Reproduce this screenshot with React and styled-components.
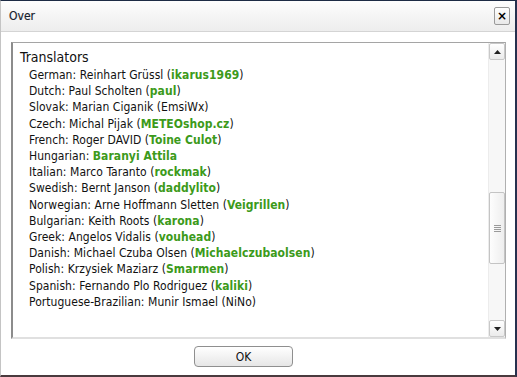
import React from "react";
import styled, { createGlobalStyle } from "styled-components";

const GlobalStyle = createGlobalStyle`
  html, body {
    margin: 0;
    padding: 0;
    background: #ffffff;
  }
  * {
    box-sizing: border-box;
  }
`;

const translators = [
  { lang: "German", name: "Reinhart Grüssl", nick: "ikarus1969", bold: true },
  { lang: "Dutch", name: "Paul Scholten", nick: "paul", bold: true },
  { lang: "Slovak", name: "Marian Ciganik", nick: "EmsiWx" },
  { lang: "Czech", name: "Michal Pijak", nick: "METEOshop.cz", bold: true },
  { lang: "French", name: "Roger DAVID", nick: "Toine Culot", bold: true },
  { lang: "Hungarian", name: "Baranyi Attila", nameBold: true },
  { lang: "Italian", name: "Marco Taranto", nick: "rockmak", bold: true },
  { lang: "Swedish", name: "Bernt Janson", nick: "daddylito", bold: true },
  { lang: "Norwegian", name: "Arne Hoffmann Sletten", nick: "Veigrillen", bold: true },
  { lang: "Bulgarian", name: "Keith Roots", nick: "karona", bold: true },
  { lang: "Greek", name: "Angelos Vidalis", nick: "vouhead", bold: true },
  { lang: "Danish", name: "Michael Czuba Olsen", nick: "Michaelczubaolsen", bold: true },
  { lang: "Polish", name: "Krzysiek Maziarz", nick: "Smarmen", bold: true },
  { lang: "Spanish", name: "Fernando Plo Rodriguez", nick: "kaliki", bold: true },
  { lang: "Portuguese-Brazilian", name: "Munir Ismael", nick: "NiNo" },
];

const Dialog = styled.div`
  width: 517px;
  height: 377px;
  display: flex;
  flex-direction: column;
  background: #ffffff;
  border-top: 1px solid #1d2b45;
  border-right: 2px solid #26314f;
  border-bottom: 2px solid #4a3a3e;
  border-left: 1px solid #c4c4c4;
  font-family: "DejaVu Sans Condensed", "DejaVu Sans", sans-serif;
`;

const TitleBar = styled.div`
  height: 31px;
  flex: none;
  display: flex;
  align-items: center;
  justify-content: space-between;
  padding: 0 5px 0 8px;
  background: linear-gradient(#fdfdfd, #ededed);
  border-bottom: 1px solid #d4d4d4;
`;

const Title = styled.span`
  font-size: 12px;
  color: #16222e;
  -webkit-text-stroke: 0.2px #16222e;
`;

const CloseButton = styled.button`
  width: 16px;
  height: 18px;
  padding: 0;
  display: flex;
  align-items: center;
  justify-content: center;
  border: 1px solid #9a9a9a;
  border-radius: 2px;
  background: linear-gradient(#ffffff, #e8e8e8);
  color: #000;
  font-family: "DejaVu Sans", sans-serif;
  font-size: 12px;
  font-weight: bold;
  line-height: 1;
`;

const Body = styled.div`
  flex: 1;
  display: flex;
  flex-direction: column;
  padding: 10px 9px 0 10px;
`;

const TextBox = styled.div`
  height: 297px;
  display: flex;
  border-top: 1px solid #a5a5a5;
  border-left: 2px solid #8c8c8c;
  border-right: 1px solid #b0b0b0;
  border-bottom: 2px solid #e0e0e0;
  background: #ffffff;
`;

const Content = styled.div`
  flex: 1;
  padding: 4px 0 0 7px;
  color: #111;
`;

const Heading = styled.div`
  font-size: 14px;
  line-height: 20px;
`;

const Row = styled.div`
  font-size: 12px;
  line-height: 16.2px;
  padding-left: 9px;
  white-space: nowrap;
  letter-spacing: 0.05px;
`;

const Green = styled.span`
  color: #3c9a1a;
  font-weight: bold;
`;

const Scrollbar = styled.div`
  width: 17px;
  flex: none;
  display: flex;
  flex-direction: column;
  background: #f7f7f7;
  border-left: 1px solid #ececec;
`;

const ArrowButton = styled.div`
  height: 17px;
  flex: none;
  display: flex;
  align-items: center;
  justify-content: center;
  border: 1px solid #c8c8c8;
  border-radius: 2px;
  background: linear-gradient(#ffffff, #ebebeb);
`;

const Track = styled.div`
  flex: 1;
  display: flex;
  flex-direction: column;
  padding-top: 132px;
`;

const Thumb = styled.div`
  height: 72px;
  display: flex;
  align-items: center;
  justify-content: center;
  border: 1px solid #c4c4c4;
  border-radius: 2px;
  background: linear-gradient(90deg, #fdfdfd, #eeeeee);
`;

const Footer = styled.div`
  flex: 1;
  display: flex;
  justify-content: center;
  align-items: flex-start;
  padding: 7px 30px 0 0;
`;

const OkButton = styled.button`
  width: 99px;
  height: 21px;
  border: 1px solid #8f8f8f;
  border-radius: 4px;
  background: linear-gradient(#ffffff, #e6e6e6);
  font-family: "DejaVu Sans Condensed", "DejaVu Sans", sans-serif;
  font-size: 12px;
  color: #111;
  padding: 0;
`;

const Triangle = ({ up }) => (
  <svg width="7" height="4" viewBox="0 0 7 4">
    <polygon
      points={up ? "0,4 7,4 3.5,0" : "0,0 7,0 3.5,4"}
      fill="#222"
    />
  </svg>
);

const Grip = () => (
  <svg width="7" height="7" viewBox="0 0 7 7">
    {[0.5, 2.5, 4.5, 6.5].map((y) => (
      <line key={y} x1="0" x2="7" y1={y} y2={y} stroke="#9a9a9a" strokeWidth="1" />
    ))}
  </svg>
);

const App = () => {
  return (
    <>
      <GlobalStyle />
      <Dialog>
        <TitleBar>
          <Title>Over</Title>
          <CloseButton>×</CloseButton>
        </TitleBar>
        <Body>
          <TextBox>
            <Content>
              <Heading>Translators</Heading>
              {translators.map((t) => (
                <Row key={t.lang}>
                  {t.lang}:{" "}
                  {t.nameBold ? <Green>{t.name}</Green> : t.name}
                  {t.nick && (
                    <>
                      {" "}(
                      {t.bold ? <Green>{t.nick}</Green> : t.nick})
                    </>
                  )}
                </Row>
              ))}
            </Content>
            <Scrollbar>
              <ArrowButton>
                <Triangle up />
              </ArrowButton>
              <Track>
                <Thumb>
                  <Grip />
                </Thumb>
              </Track>
              <ArrowButton>
                <Triangle />
              </ArrowButton>
            </Scrollbar>
          </TextBox>
          <Footer>
            <OkButton>OK</OkButton>
          </Footer>
        </Body>
      </Dialog>
    </>
  );
};

export default App;
